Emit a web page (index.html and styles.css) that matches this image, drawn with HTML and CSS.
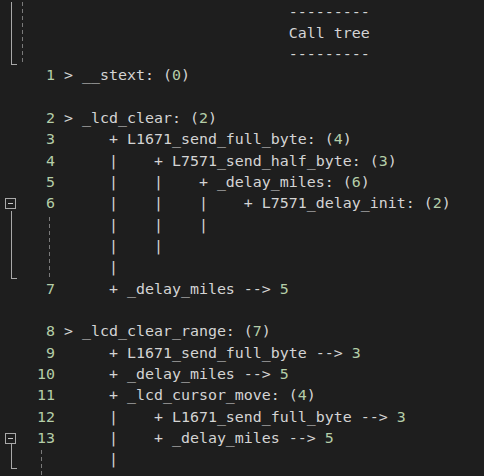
FILE: index.html
```html
<!DOCTYPE html>
<html>
<head>
<meta charset="utf-8">
<link rel="stylesheet" href="styles.css">
</head>
<body>
<div class="editor">
  <div class="group">
    <span class="vline vline-top"></span>
    <span class="guide guide-top"></span>
    <div class="row"><span class="gut"></span><span class="code">                            ---------</span></div>
    <div class="row"><span class="gut"></span><span class="code">                            Call tree</span></div>
    <div class="row"><span class="gut"></span><span class="code">                            ---------</span></div>
  </div>
  <div class="row"><span class="gut"></span><span class="code"> <span class="n">1</span> &gt; __stext: (<span class="n">0</span>)</span></div>
  <div class="row"><span class="gut"></span><span class="code"></span></div>
  <div class="row"><span class="gut"></span><span class="code"> <span class="n">2</span> &gt; _lcd_clear: (<span class="n">2</span>)</span></div>
  <div class="row"><span class="gut"></span><span class="code"> <span class="n">3</span>      + L1671_send_full_byte: (<span class="n">4</span>)</span></div>
  <div class="row"><span class="gut"></span><span class="code"> <span class="n">4</span>      |    + L7571_send_half_byte: (<span class="n">3</span>)</span></div>
  <div class="row"><span class="gut"></span><span class="code"> <span class="n">5</span>      |    |    + _delay_miles: (<span class="n">6</span>)</span></div>
  <div class="row"><span class="gut"><span class="fold-box"></span></span><span class="code"> <span class="n">6</span>      |    |    |    + L7571_delay_init: (<span class="n">2</span>)</span></div>
  <div class="group">
    <span class="vline vline-mid"></span>
    <span class="guide guide-mid"></span>
    <div class="row"><span class="gut"></span><span class="code">        |    |    |</span></div>
    <div class="row"><span class="gut"></span><span class="code">        |    |</span></div>
    <div class="row"><span class="gut"></span><span class="code">        |</span></div>
  </div>
  <div class="row"><span class="gut"></span><span class="code"> <span class="n">7</span>      + _delay_miles --&gt; <span class="n">5</span></span></div>
  <div class="row"><span class="gut"></span><span class="code"></span></div>
  <div class="row"><span class="gut"></span><span class="code"> <span class="n">8</span> &gt; _lcd_clear_range: (<span class="n">7</span>)</span></div>
  <div class="row"><span class="gut"></span><span class="code"> <span class="n">9</span>      + L1671_send_full_byte --&gt; <span class="n">3</span></span></div>
  <div class="row"><span class="gut"></span><span class="code"><span class="n">10</span>      + _delay_miles --&gt; <span class="n">5</span></span></div>
  <div class="row"><span class="gut"></span><span class="code"><span class="n">11</span>      + _lcd_cursor_move: (<span class="n">4</span>)</span></div>
  <div class="row"><span class="gut"></span><span class="code"><span class="n">12</span>      |    + L1671_send_full_byte --&gt; <span class="n">3</span></span></div>
  <div class="row"><span class="gut"><span class="fold-box"></span></span><span class="code"><span class="n">13</span>      |    + _delay_miles --&gt; <span class="n">5</span></span></div>
  <div class="group">
    <span class="vline vline-end"></span>
    <span class="guide guide-end"></span>
    <div class="row"><span class="gut"></span><span class="code">        |</span></div>
  </div>
</div>
</body>
</html>
```
FILE: styles.css
```css
html, body {
  margin: 0;
  padding: 0;
  background: #1e1e1e;
}
body {
  width: 484px;
  height: 476px;
  overflow: hidden;
}
.editor {
  padding-top: 1.5px;
  font-family: "DejaVu Sans Mono", "Liberation Mono", monospace;
  font-size: 14.95px;
  color: #d4d4d4;
}
.row {
  display: flex;
  align-items: center;
  height: 21.333px;
  line-height: 21.333px;
}
.gut {
  flex: none;
  width: 37px;
  height: 100%;
  display: flex;
  align-items: center;
}
.code {
  white-space: pre;
}
.n {
  color: #b5cea8;
}
.group {
  position: relative;
}
.vline {
  position: absolute;
  left: 11px;
  width: 5px;
  border-left: 1px solid #a9a9a9;
  border-bottom: 1px solid #a9a9a9;
}
.vline-top { top: 0; bottom: 0; }
.vline-mid { top: -4px; bottom: 0; }
.vline-end { top: -6px; bottom: 2px; }
.guide {
  position: absolute;
  width: 1px;
  background: repeating-linear-gradient(to bottom, #7a7a7a 0 4px, transparent 4px 7px);
}
.guide-top { left: 22px; top: 0; bottom: 3px; }
.guide-mid { left: 49px; top: 2px; bottom: 1px; }
.guide-end { left: 41px; top: 1px; bottom: -8px; }
.fold-box {
  position: relative;
  margin-left: 5px;
  width: 11px;
  height: 11px;
  box-sizing: border-box;
  border: 1px solid #a9a9a9;
  margin-top: -1px;
}
.fold-box::after {
  content: "";
  position: absolute;
  left: 2px;
  top: 4px;
  width: 5px;
  height: 1px;
  background: #c8c8c8;
}
```
